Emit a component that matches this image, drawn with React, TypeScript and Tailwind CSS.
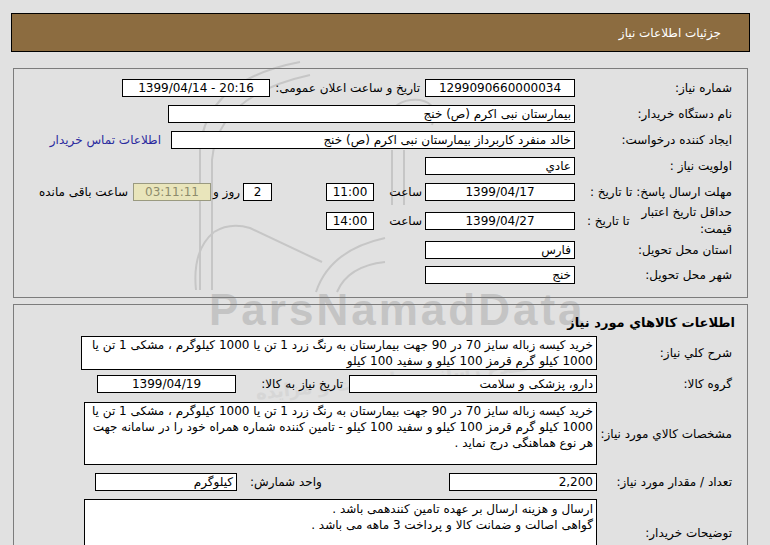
import type React from 'react';

const box = 'flex shrink-0 items-center border border-black bg-white px-[3px] leading-none whitespace-nowrap';

function Label({ className = '', children }: { className?: string; children: React.ReactNode }) {
  return <div className={`shrink-0 whitespace-nowrap ${className}`}>{children}</div>;
}

function Watermark() {
  return (
    <div className="pointer-events-none absolute inset-0">
      <svg width="770" height="545" className="absolute left-0 top-0" fill="none" stroke="#c6c6c6" strokeWidth="2">
        <path d="M200 290 L200 150 Q205 80 300 62" />
        <path d="M212 290 L212 160 Q218 95 310 75" />
        <path d="M214 232 Q230 222 250 228 L322 262" />
        <path d="M196 290 Q192 250 214 232" />
        <path d="M316 292 Q330 250 385 238" />
        <path d="M337 292 Q348 266 385 262" />
        <path d="M388 118 Q395 98 420 100 Q440 104 432 125" />
        <path d="M392 150 L392 205" />
        <path d="M404 150 L404 205" />
      </svg>
      <div className="absolute left-[209px] top-[277px] font-['Liberation_Sans',sans-serif] text-[44px] font-bold tracking-[3px] text-[#c4c4c4]">
        ParsNamadData
      </div>
      <div
        dir="rtl"
        className="absolute left-[255px] top-[362px] rotate-[-6deg] font-['DejaVu_Sans',sans-serif] text-[18px] font-bold text-[#d6d6d6]"
      >
        پایگاه اطلاع رسانی مناقصات و مزایده
      </div>
    </div>
  );
}

export default function App() {
  return (
    <div className="relative h-[545px] w-[770px] overflow-hidden bg-[#e1e1e1] font-['DejaVu_Sans',sans-serif] text-[12px] text-black">
      <Watermark />
      <div className="relative pt-[13px]">
        <div
          dir="rtl"
          className="ml-[11px] flex h-[39px] w-[739px] items-center border border-black bg-[#8c6c40] pr-[28px] text-[12px] text-white"
        >
          جزئیات اطلاعات نیاز
        </div>

        {/* panel 1 */}
        <div dir="rtl" className="ml-[13px] mt-[16px] h-[230px] w-[735px] border border-[#7c7c7c] pr-[15px] pt-[10px]">
          <div className="flex h-[18px] items-center">
            <Label className="w-[157px]">شماره نیاز:</Label>
            <div dir="ltr" className={`${box} h-[18px] w-[150px] justify-center`}>1299090660000034</div>
            <Label className="w-[155px] pr-[5px]">تاریخ و ساعت اعلان عمومی:</Label>
            <div dir="ltr" className={`${box} h-[18px] w-[148px] justify-center`}>1399/04/14 - 20:16</div>
          </div>

          <div className="mt-[8px] flex h-[18px] items-center">
            <Label className="w-[157px]">نام دستگاه خریدار:</Label>
            <div className={`${box} h-[18px] w-[407px]`}>بیمارستان نبی اکرم (ص) خنج</div>
          </div>

          <div className="mt-[8px] flex h-[18px] items-center">
            <Label className="w-[157px]">ایجاد کننده درخواست:</Label>
            <div className={`${box} h-[18px] w-[404px]`}>خالد منفرد کاربرداز بیمارستان نبی اکرم (ص) خنج</div>
            <Label className="mr-[10px] text-[#2a2a9e]">اطلاعات تماس خریدار</Label>
          </div>

          <div className="mt-[8px] flex h-[18px] items-center">
            <Label className="w-[157px]">اولویت نیاز :</Label>
            <div className={`${box} h-[18px] w-[150px]`}>عادي</div>
          </div>

          <div className="mt-[8px] flex h-[18px] items-center">
            <Label className="w-[157px]">مهلت ارسال پاسخ: تا تاریخ :</Label>
            <div dir="ltr" className={`${box} h-[18px] w-[150px] justify-center`}>1399/04/17</div>
            <Label className="w-[51px] pr-[3px]">ساعت</Label>
            <div dir="ltr" className={`${box} h-[18px] w-[48px] justify-center`}>11:00</div>
            <div className="w-[54px] shrink-0" />
            <div dir="ltr" className={`${box} h-[18px] w-[29px] justify-center`}>2</div>
            <Label className="w-[32px] pr-[3px]">روز و</Label>
            <div
              dir="ltr"
              className="flex h-[18px] w-[78px] shrink-0 items-center justify-center border border-[#9a9a80] bg-[#e9e5bb] leading-none text-[#8d8b6c]"
            >
              03:11:11
            </div>
            <Label className="mr-[5px]">ساعت باقی مانده</Label>
          </div>

          <div className="mt-[3px] flex h-[34px] items-center">
            <div className="flex w-[157px] shrink-0 items-center justify-between pl-[12px]">
              <div className="leading-[17px]">
                حداقل تاریخ اعتبار
                <br />
                قیمت:
              </div>
              <div className="whitespace-nowrap">تا تاریخ :</div>
            </div>
            <div dir="ltr" className={`${box} h-[18px] w-[150px] justify-center`}>1399/04/27</div>
            <Label className="w-[51px] pr-[3px]">ساعت</Label>
            <div dir="ltr" className={`${box} h-[18px] w-[48px] justify-center`}>14:00</div>
          </div>

          <div className="mt-[3px] flex h-[18px] items-center">
            <Label className="w-[157px]">استان محل تحویل:</Label>
            <div className={`${box} h-[18px] w-[150px]`}>فارس</div>
          </div>

          <div className="mt-[7px] flex h-[18px] items-center">
            <Label className="w-[157px]">شهر محل تحویل:</Label>
            <div className={`${box} h-[18px] w-[150px]`}>خنج</div>
          </div>
        </div>

        {/* panel 2 */}
        <div dir="rtl" className="ml-[13px] mt-[6px] h-[260px] w-[735px] border border-[#7c7c7c] pr-[15px] pt-[10px]">
          <div className="mr-[-3px] h-[16px] text-[13px] font-bold leading-[16px]">اطلاعات کالاهاي مورد نیاز</div>

          <div className="mt-[5px] flex h-[34px] items-center">
            <Label className="w-[135px]">شرح کلي نیاز:</Label>
            <div className="h-[34px] w-[516px] shrink-0 overflow-hidden whitespace-nowrap border border-black bg-white px-[3px] leading-[16px]">
              خرید کیسه زباله سایز 70 در 90 جهت بیمارستان به رنگ زرد 1 تن  یا 1000 کیلوگرم ، مشکی 1 تن یا
              <br />
              1000 کیلو گرم قرمز 100 کیلو و سفید 100 کیلو
            </div>
          </div>

          <div className="mt-[5px] flex h-[18px] items-center">
            <Label className="w-[135px]">گروه کالا:</Label>
            <div className={`${box} h-[18px] w-[248px]`}>دارو، پزشکی و سلامت</div>
            <Label className="w-[113px] pr-[6px]">تاریخ نیاز به کالا:</Label>
            <div dir="ltr" className={`${box} h-[18px] w-[139px] justify-center`}>1399/04/19</div>
          </div>

          <div className="mt-[9px] flex h-[63px] items-center">
            <Label className="w-[135px]">مشخصات کالاي مورد نیاز:</Label>
            <div className="h-[63px] w-[513px] shrink-0 overflow-hidden whitespace-nowrap border border-black bg-white px-[3px] leading-[16px]">
              خرید کیسه زباله سایز 70 در 90 جهت بیمارستان به رنگ زرد 1 تن  یا 1000 کیلوگرم ، مشکی 1 تن یا
              <br />
              1000 کیلو گرم قرمز 100 کیلو و سفید 100 کیلو - تامین کننده شماره همراه خود را در سامانه جهت
              <br />
              هر نوع هماهنگی درج نماید .
            </div>
          </div>

          <div className="mt-[8px] flex h-[18px] items-center">
            <Label className="w-[135px]">تعداد / مقدار مورد نیاز:</Label>
            <div dir="ltr" className={`${box} h-[18px] w-[148px] justify-end`}>2,200</div>
            <div className="flex w-[212px] shrink-0 justify-end pl-[13px] whitespace-nowrap">واحد شمارش:</div>
            <div className={`${box} h-[18px] w-[142px]`}>کیلوگرم</div>
          </div>

          <div className="mt-[8px] flex h-[60px] items-center">
            <Label className="w-[135px] pt-[8px]">توضیحات خریدار:</Label>
            <div className="h-[60px] w-[513px] shrink-0 self-start whitespace-nowrap border border-black bg-white px-[3px] pt-[1px] leading-[16px]">
              ارسال و هزینه ارسال بر عهده تامین کنندهمی باشد .
              <br />
              گواهی اصالت و ضمانت کالا و پرداخت 3 ماهه می باشد .
            </div>
          </div>
        </div>
      </div>
    </div>
  );
}
